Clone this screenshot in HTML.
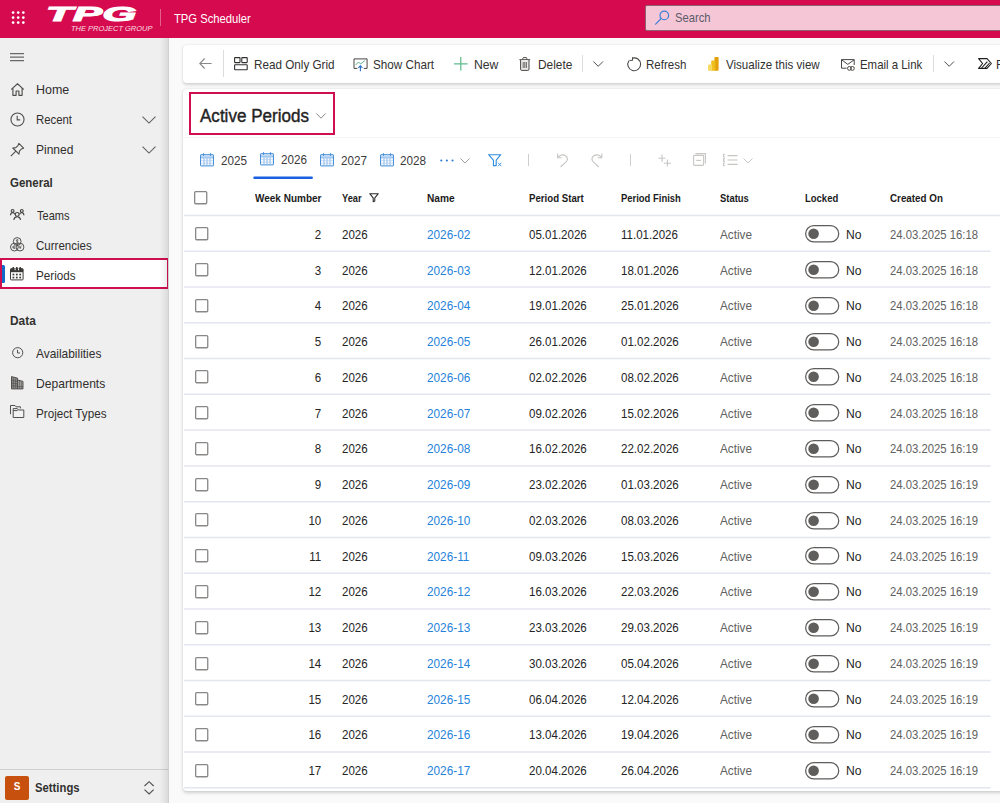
<!DOCTYPE html>
<html lang="en">
<head>
<meta charset="utf-8">
<title>TPG Scheduler - Active Periods</title>
<style>
html,body{margin:0;padding:0}
body{width:1000px;height:803px;overflow:hidden;background:#fafafa;font-family:"Liberation Sans",sans-serif;font-size:12.8px;color:#242424;position:relative;letter-spacing:0;-webkit-font-smoothing:antialiased}
*{box-sizing:border-box}
.abs,.t{position:absolute;white-space:nowrap}
.t,.c{transform-origin:0 50%;letter-spacing:0}
.t{line-height:16px;height:16px}
svg{position:absolute;overflow:visible}
svg.cb{position:absolute;left:10.5px;top:11.2px}

/* top bar */
#top{position:absolute;left:0;top:0;width:1000px;height:38px;background:#d60a4e}
#top .app{color:#fff}
#top .div{position:absolute;left:159.5px;top:9px;width:1px;height:16.5px;background:rgba(255,255,255,.35)}
#logo{position:absolute;left:47px;top:0;width:110px;height:37px;color:#fff}
#logo .big{position:absolute;left:-1.2px;top:3.2px;font-weight:700;font-style:italic;font-size:19.8px;line-height:22px;letter-spacing:0.2px;transform-origin:0 50%;transform:scaleX(2.2);-webkit-text-stroke:1.1px #fff}
#logo .sub{position:absolute;left:23.5px;top:23.5px;font-style:italic;font-size:8px;line-height:10px;letter-spacing:0;transform-origin:0 50%;transform:scaleX(0.935);opacity:.85}
#search{position:absolute;left:645px;top:4.6px;width:370px;height:26.5px;background:#f5c6d6;border:1px solid rgba(70,30,50,.6);border-radius:2px}
#search .t{color:#5b5b6b}

/* sidebar */
#side{position:absolute;left:0;top:38px;width:169px;height:765px;background:#efefef}
#side:after{content:"";position:absolute;right:0;top:0;width:10px;height:100%;background:linear-gradient(to right,rgba(0,0,0,0),rgba(0,0,0,.03) 40%,rgba(0,0,0,.085) 90%,rgba(208,208,208,1) 90%)}
#side .t{color:#2f2e2d}
#side .h{font-weight:700;color:#323130}
#side .sel{position:absolute;left:0;top:220.2px;width:169px;height:31.2px;background:#fff;border:2px solid #d00f50}
#side .sel i{position:absolute;left:0;top:5.2px;width:3px;height:18px;background:#1468c8;border-radius:0 1.5px 1.5px 0}
#side .foot{position:absolute;left:0;top:730.6px;width:169px;height:1px;background:#cfcfcf}
#side .badge{position:absolute;left:5px;top:737.7px;width:24px;height:24px;background:#c8500f;border-radius:2px;color:#fff;font-weight:700;font-size:10px;line-height:22.5px;text-align:center;letter-spacing:0}

/* command bar */
#cmd{position:absolute;left:182.6px;top:44.8px;width:830px;height:38px;background:#fff;border-radius:4px;box-shadow:0 1.4px 3px rgba(0,0,0,.15),0 0 2px rgba(0,0,0,.07)}
#cmd .t{color:#323130}
#cmd .sep{position:absolute;top:5px;width:1px;height:27px;background:#dcdcdc}

/* card */
#card{position:absolute;left:182.6px;top:89px;width:830px;height:701.7px;background:#fff;border-radius:4px;box-shadow:0 1.6px 3.5px rgba(0,0,0,.17),0 0 2px rgba(0,0,0,.07)}
#title{position:absolute;left:189px;top:92px;width:146px;height:43px;border:2px solid #d00f50;background:#fff}
#title .t{line-height:22px;height:22px;font-weight:400;color:#242424;-webkit-text-stroke:0.42px #242424}
.tab{color:#3b3a39}
#tabline{position:absolute;left:254px;top:176.5px;width:59px;height:2px;background:#1a66c9;border-radius:1px}
.hd{font-weight:700;color:#1b1b1b}

/* grid rows */
.grid{position:absolute;left:0;top:0;width:1000px;height:803px;pointer-events:none}
#hline{display:none}
.row{position:absolute;left:184px;width:806.5px;height:35.77px}
.cb{position:absolute;left:10.5px;top:11.2px}
.c{position:absolute;line-height:16px;height:16px;white-space:nowrap;color:#242424}
.nm{color:#2583da}
.st,.cr{color:#616161}
.yr{left:157.82px;transform:scaleX(0.9019)}
.nm{left:243.41px;transform:scaleX(0.9213)}
.ps{left:345.14px;transform:scaleX(0.9019)}
.pf{left:437.23px;transform:scaleX(0.9019)}
.st{left:535.84px;transform:scaleX(0.9188)}
.no{left:662.23px;transform:scaleX(0.9470)}
.cr{left:706.33px;transform:scaleX(0.8833)}
.wk{right:669.51px;transform-origin:100% 50%;transform:scaleX(0.9019)}
.tg{position:absolute;left:620.6px;top:9.3px}
</style>
</head>

<body>
<div id="top">
  <svg id="waffle" style="left:11px;top:11px" width="15" height="14" viewBox="0 0 15 14">
    <g fill="#fff">
      <circle cx="2.1" cy="1.6" r="1.35"/><circle cx="7.2" cy="1.6" r="1.35"/><circle cx="12.3" cy="1.6" r="1.35"/>
      <circle cx="2.1" cy="6.6" r="1.35"/><circle cx="7.2" cy="6.6" r="1.35"/><circle cx="12.3" cy="6.6" r="1.35"/>
      <circle cx="2.1" cy="11.6" r="1.35"/><circle cx="7.2" cy="11.6" r="1.35"/><circle cx="12.3" cy="11.6" r="1.35"/>
    </g>
  </svg>
  <div id="logo"><span class="abs big">TPG</span><span class="abs sub">THE PROJECT GROUP</span></div>
  <div class="div"></div>
  <span class="t app" style="left:174.32px;top:11px;transform:scaleX(0.8784)">TPG Scheduler</span>
  <div id="search">
    <svg style="left:8.6px;top:4.6px" width="15" height="15" viewBox="0 0 15 15"><circle cx="9.3" cy="5.4" r="4.3" fill="none" stroke="#3f7fd6" stroke-width="1.2"/><path d="M6.2 8.5 L0.6 14.1" stroke="#3f7fd6" stroke-width="1.2" fill="none" stroke-linecap="round"/></svg>
    <span class="t" style="left:28.69px;top:4.4px;transform:scaleX(0.8771)">Search</span>
  </div>
</div>

<div id="side">
  <svg id="burger" style="left:10px;top:14.5px" width="14" height="9" viewBox="0 0 14 9"><path d="M0 0.7h14M0 4.2h14M0 7.7h14" stroke="#6a6968" stroke-width="1.2" fill="none"/></svg>

  <svg style="left:11.1px;top:45.4px" width="13" height="13" viewBox="0 0 13 13"><path d="M0.6 6.1 L6.5 0.8 L12.4 6.1 M1.9 5.1 V12.3 H5.1 V8 H7.9 V12.3 H11.1 V5.1" fill="none" stroke="#4f4e4d" stroke-width="1.15" stroke-linejoin="round" stroke-linecap="round"/></svg>
  <span class="t" style="left:35.60px;top:44px;transform:scaleX(0.9750)">Home</span>

  <svg style="left:9.95px;top:73.6px" width="15" height="15" viewBox="0 0 15 15"><circle cx="7.5" cy="7.5" r="6.55" fill="none" stroke="#4f4e4d" stroke-width="1.1"/><path d="M7.2 3.8 V7.9 H10.2" fill="none" stroke="#4f4e4d" stroke-width="1.1"/></svg>
  <span class="t" style="left:35.69px;top:74px;transform:scaleX(0.8878)">Recent</span>
  <svg style="left:142.1px;top:78px" width="14" height="8" viewBox="0 0 14 8"><path d="M0.5 0.6 L7 7 L13.5 0.6" fill="none" stroke="#5e5d5c" stroke-width="1.05"/></svg>

  <svg style="left:9.8px;top:103.6px" width="15" height="15" viewBox="0 0 15 15"><path d="M8.8 1.4 L13.6 6.2 L11.4 7 L9.4 9.2 L9 12.2 L2.8 6 L5.8 5.6 L8 3.6 Z M5.6 9.4 L0.8 14.2" fill="none" stroke="#4f4e4d" stroke-width="1.1" stroke-linejoin="round"/></svg>
  <span class="t" style="left:35.64px;top:104px;transform:scaleX(0.9391)">Pinned</span>
  <svg style="left:142.1px;top:108px" width="14" height="8" viewBox="0 0 14 8"><path d="M0.5 0.6 L7 7 L13.5 0.6" fill="none" stroke="#5e5d5c" stroke-width="1.05"/></svg>

  <span class="t h" style="left:9.94px;top:137px;transform:scaleX(0.8959)">General</span>

  <svg style="left:10px;top:171.1px" width="14.4" height="11" viewBox="0 0 14.4 11"><g fill="none" stroke="#454443" stroke-width="1.15"><circle cx="7.2" cy="5.4" r="1.9"/><path d="M3.8 10.8 C4.2 8.6 5.6 7.8 7.2 7.8 S10.2 8.6 10.6 10.8"/><circle cx="2.6" cy="1.9" r="1.4"/><circle cx="11.8" cy="1.9" r="1.4"/><path d="M0.5 6.2 C0.5 4.4 1.4 3.7 2.6 3.7 S4.6 4.4 4.8 5.4 M13.9 6.2 C13.9 4.4 13 3.7 11.8 3.7 S9.8 4.4 9.6 5.4"/></g></svg>
  <span class="t" style="left:36.62px;top:170px;transform:scaleX(0.8638)">Teams</span>

  <svg style="left:10px;top:199.2px" width="14.4" height="14.6" viewBox="0 0 14.4 14.6"><g fill="none" stroke="#4f4e4d" stroke-width="1"><circle cx="7.2" cy="4.5" r="3.9"/><circle cx="4.4" cy="10.1" r="3.9"/><circle cx="10" cy="10.1" r="3.9"/><path d="M8.4 3.2 C7.6 2.4 6.2 2.8 6.4 3.8 C6.6 4.8 8.2 4.4 8.2 5.6 C8.2 6.4 6.8 6.6 6 5.8 M7.2 2.2 V6.8" stroke-width="0.8"/><path d="M5.6 9 C4.6 8.2 3 9 3 10.2 C3 11.4 4.6 12 5.6 11.2 M2.6 9.8 H5 M2.6 10.8 H5 M9 8.6 L10.2 10.4 L11.4 8.6 M10.2 10.4 V12 M9.2 10.6 H11.2" stroke-width="0.7"/></g></svg>
  <span class="t" style="left:36.02px;top:200px;transform:scaleX(0.9013)">Currencies</span>

  <div class="sel"><i></i></div>
  <svg style="left:10.4px;top:229.4px" width="13.6" height="13.4" viewBox="0 0 13.6 13.4"><rect x="0.5" y="1.7" width="12.6" height="11.2" rx="0.7" fill="#fff" stroke="#3b3a39" stroke-width="1"/><rect x="0.5" y="1.7" width="12.6" height="3.5" fill="#3b3a39"/><g fill="#3b3a39"><rect x="2.6" y="0" width="1.5" height="2.6"/><rect x="6.05" y="0" width="1.5" height="2.6"/><rect x="9.5" y="0" width="1.5" height="2.6"/><rect x="2.5" y="6.7" width="1.8" height="1.7"/><rect x="5.9" y="6.7" width="1.8" height="1.7"/><rect x="9.3" y="6.7" width="1.8" height="1.7"/><rect x="2.5" y="9.7" width="1.8" height="1.7"/><rect x="5.9" y="9.7" width="1.8" height="1.7"/><rect x="9.3" y="9.7" width="1.8" height="1.7"/></g><g fill="#fff"><rect x="4.6" y="1.4" width="1" height="1.8"/><rect x="8" y="1.4" width="1" height="1.8"/></g></svg>
  <span class="t" style="left:35.67px;top:230px;transform:scaleX(0.9113)">Periods</span>

  <span class="t h" style="left:9.63px;top:275px;transform:scaleX(0.9279)">Data</span>

  <svg style="left:11.7px;top:308.6px" width="11.4" height="11.4" viewBox="0 0 11.4 11.4"><circle cx="5.7" cy="5.7" r="5.1" fill="none" stroke="#4f4e4d" stroke-width="1"/><path d="M5.5 2.8 V6 H8" fill="none" stroke="#4f4e4d" stroke-width="1"/></svg>
  <span class="t" style="left:36.24px;top:308px;transform:scaleX(0.9312)">Availabilities</span>

  <svg style="left:10.9px;top:337.8px" width="12.6" height="13.4" viewBox="0 0 12.6 13.4"><path d="M0.5 12.9 V0.6 L6.6 2.2 V12.9 Z" fill="#8f8d8b" stroke="#4f4e4d" stroke-width="1"/><path d="M6.6 4 L12 5.4 V12.9 H6.6 Z" fill="#a9a7a5" stroke="#4f4e4d" stroke-width="1"/><path d="M2.4 2 V12 M4.6 2.6 V12 M0.8 4.4 L6.4 5.4 M0.8 7.2 L6.4 7.8 M0.8 10 H6.4 M8.6 5 V12.6 M10.4 5.6 V12.6 M6.8 10.6 H12" fill="none" stroke="#4f4e4d" stroke-width="0.6"/></svg>
  <span class="t" style="left:35.63px;top:338px;transform:scaleX(0.9456)">Departments</span>

  <svg style="left:10px;top:367px" width="14.3" height="13" viewBox="0 0 14.3 13"><g fill="none" stroke="#4f4e4d" stroke-width="1"><path d="M0.5 9.2 V0.5 H5 L6 1.8 H10.4 V3.4"/><path d="M3.2 3.6 H7.4 L8.4 5 H13.8 V12.5 H3.2 Z" fill="#f3f3f3"/><path d="M3.2 5.6 H7.6"/></g></svg>
  <span class="t" style="left:35.67px;top:368px;transform:scaleX(0.9124)">Project Types</span>

  <div class="foot"></div>
  <div class="badge">S</div>
  <span class="t" style="left:34.86px;top:742px;transform:scaleX(0.8831);font-weight:700;color:#323130">Settings</span>
  <svg style="left:144.2px;top:743px" width="10.2" height="13.6" viewBox="0 0 10.2 13.6"><path d="M0.5 5 L5.1 0.7 L9.7 5 M0.5 8.6 L5.1 12.9 L9.7 8.6" fill="none" stroke="#4f4e4d" stroke-width="1.1"/></svg>
</div>

<div id="cmd">
  <svg style="left:16.6px;top:13px" width="13" height="11" viewBox="0 0 13 11"><path d="M5.6 0.5 L0.8 5.5 L5.6 10.5 M1 5.5 H12.6" fill="none" stroke="#8a8886" stroke-width="1.1"/></svg>
  <div class="sep" style="left:40.4px;top:5.4px"></div>

  <svg style="left:51.6px;top:12px" width="14" height="14" viewBox="0 0 14 14"><g fill="none" stroke="#323130" stroke-width="1.1"><rect x="0.6" y="0.6" width="5.4" height="5" rx="0.5"/><rect x="7.8" y="0.6" width="5.4" height="5" rx="0.5"/><rect x="0.6" y="7.8" width="12.6" height="5" rx="0.5"/></g></svg>
  <span class="t" style="left:71.06px;top:12.2px;transform:scaleX(0.9139)">Read Only Grid</span>

  <svg style="left:170.7px;top:13px" width="14.6" height="13.4" viewBox="0 0 14.6 13.4"><g fill="none" stroke-width="1"><path d="M4.4 10.4 H1 V0.9 H14.1 V10.4 H10.8" stroke="#484644"/><path d="M2.6 7 L5.6 4 L7.6 6 L11.8 2.6" stroke="#5cb486"/><path d="M7.4 13.2 V8 M5.4 9.8 L7.4 7.8 L9.4 9.8" stroke="#2b6fcf" stroke-width="1.1"/></g></svg>
  <span class="t" style="left:190.67px;top:12.2px;transform:scaleX(0.9127)">Show Chart</span>

  <svg style="left:271.7px;top:12.1px" width="13.6" height="13.6" viewBox="0 0 13.6 13.6"><path d="M6.8 0 V13.6 M0 6.8 H13.6" stroke="#62bb8d" stroke-width="1.25" fill="none"/></svg>
  <span class="t" style="left:290.92px;top:12.2px;transform:scaleX(0.9537)">New</span>

  <svg style="left:336.3px;top:12.2px" width="11.6" height="14" viewBox="0 0 11.6 14"><g fill="none" stroke="#484644" stroke-width="1"><path d="M0.4 2.7 H11.2 M3.8 2.5 V1.4 Q3.8 0.6 4.6 0.6 H7 Q7.8 0.6 7.8 1.4 V2.5"/><path d="M1.6 3 V12.2 Q1.6 13.4 2.8 13.4 H8.8 Q10 13.4 10 12.2 V3" fill="#e9e9e9"/><path d="M4.2 5 V11 M5.8 5 V11 M7.4 5 V11" stroke="#6a6866"/></g></svg>
  <span class="t" style="left:355.35px;top:12.2px;transform:scaleX(0.9296)">Delete</span>
  <div class="sep" style="left:399.5px;top:10.2px;height:17.4px"></div>
  <svg style="left:410.7px;top:16.6px" width="10.4" height="6" viewBox="0 0 10.4 6"><path d="M0.4 0.5 L5.2 5.3 L10 0.5" fill="none" stroke="#4f4e4d" stroke-width="1"/></svg>

  <svg style="left:444.5px;top:12px" width="14.4" height="14.4" viewBox="0 0 14.4 14.4"><g fill="none" stroke="#484644" stroke-width="1.1"><path d="M5.2 1.2 A6.4 6.4 0 1 1 1.9 3.7"/><path d="M5.6 0.2 V3.4 H2.4" stroke-width="1"/></g></svg>
  <span class="t" style="left:463.48px;top:12.2px;transform:scaleX(0.8988)">Refresh</span>

  <svg style="left:525.4px;top:12.2px" width="10.8" height="13.8" viewBox="0 0 10.8 13.8"><rect x="6.4" y="0" width="4.2" height="13.8" rx="0.8" fill="#e2a10a"/><rect x="3.2" y="3.6" width="4.2" height="10.2" rx="0.8" fill="#f0be1c"/><rect x="0" y="7.4" width="4.2" height="6.4" rx="0.8" fill="#f7d860"/></svg>
  <span class="t" style="left:543.64px;top:12.2px;transform:scaleX(0.9043)">Visualize this view</span>

  <svg style="left:658.3px;top:14.4px" width="14" height="12" viewBox="0 0 14 12"><g fill="none" stroke="#484644" stroke-width="1"><path d="M5.6 9.2 H0.5 V0.6 H13.2 V6"/><path d="M0.6 0.8 L6.8 5.4 L13.1 0.8"/><circle cx="8.4" cy="9.4" r="1.9"/><circle cx="11.4" cy="9.4" r="1.9"/></g></svg>
  <span class="t" style="left:677.49px;top:12.2px;transform:scaleX(0.8926)">Email a Link</span>
  <div class="sep" style="left:750.5px;top:10.2px;height:17.4px"></div>
  <svg style="left:761.3px;top:16.4px" width="10.4" height="6" viewBox="0 0 10.4 6"><path d="M0.4 0.5 L5.2 5.3 L10 0.5" fill="none" stroke="#4f4e4d" stroke-width="1"/></svg>

  <svg style="left:795.6px;top:13.5px" width="14" height="11" viewBox="0 0 14 11"><g fill="none" stroke="#201f1e" stroke-width="1.1" stroke-linejoin="round"><path d="M0.6 0.6 H9 L13.4 5.5 L9 10.4 H0.6 L4.6 5.5 Z"/><path d="M3.6 10 L9.4 3.6 M7 10.2 L11.6 5"/></g></svg>
  <span class="t" style="left:813.25px;top:12.2px;transform:scaleX(0.9291)">Flow</span>
</div>

<div id="card"></div>
<div class="abs" style="left:183px;top:137px;width:817px;height:1px;background:#f6f6f6"></div>
<div id="title"><span class="t" style="left:9.11px;top:11px;transform:scaleX(0.9466);font-size:18px">Active Periods</span>
  <svg style="left:125.2px;top:19.3px" width="10" height="6" viewBox="0 0 10 6"><path d="M0.4 0.5 L5 5.2 L9.6 0.5" fill="none" stroke="#8a8886" stroke-width="1"/></svg>
</div>

<div id="tabs">
  <svg class="cal" style="left:200.3px;top:152.9px" width="14" height="14" viewBox="0 0 14 14"><rect x="0.55" y="1.7" width="12.9" height="11.2" rx="0.4" fill="#fdfeff" stroke="#3f8ad8" stroke-width="1"/><rect x="1" y="2.2" width="12" height="2.3" fill="#bcd7f3"/><path d="M1 4.9 H13" stroke="#6aa5e3" stroke-width="0.8"/><path d="M3.5 0.2 V2.8 M10.5 0.2 V2.8" stroke="#3f8ad8" stroke-width="1.1"/><path d="M4 5.4 V12.4 M7 5.4 V12.4 M10 5.4 V12.4" stroke="#7eb2e8" stroke-width="1" fill="none"/><path d="M1.2 7.6 H12.8 M1.2 10.2 H12.8" stroke="#b5d2f1" stroke-width="0.8" fill="none"/></svg>
  <span class="t tab" style="left:220.71px;top:153px;transform:scaleX(0.9148)">2025</span>
  <svg class="cal" style="left:260px;top:151.5px" width="14" height="14" viewBox="0 0 14 14"><rect x="0.55" y="1.7" width="12.9" height="11.2" rx="0.4" fill="#fdfeff" stroke="#3f8ad8" stroke-width="1"/><rect x="1" y="2.2" width="12" height="2.3" fill="#bcd7f3"/><path d="M1 4.9 H13" stroke="#6aa5e3" stroke-width="0.8"/><path d="M3.5 0.2 V2.8 M10.5 0.2 V2.8" stroke="#3f8ad8" stroke-width="1.1"/><path d="M4 5.4 V12.4 M7 5.4 V12.4 M10 5.4 V12.4" stroke="#7eb2e8" stroke-width="1" fill="none"/><path d="M1.2 7.6 H12.8 M1.2 10.2 H12.8" stroke="#b5d2f1" stroke-width="0.8" fill="none"/></svg>
  <span class="t tab" style="left:280.82px;top:152px;transform:scaleX(0.9133)">2026</span>
  <svg class="cal" style="left:320px;top:152.5px" width="14" height="14" viewBox="0 0 14 14"><rect x="0.55" y="1.7" width="12.9" height="11.2" rx="0.4" fill="#fdfeff" stroke="#3f8ad8" stroke-width="1"/><rect x="1" y="2.2" width="12" height="2.3" fill="#bcd7f3"/><path d="M1 4.9 H13" stroke="#6aa5e3" stroke-width="0.8"/><path d="M3.5 0.2 V2.8 M10.5 0.2 V2.8" stroke="#3f8ad8" stroke-width="1.1"/><path d="M4 5.4 V12.4 M7 5.4 V12.4 M10 5.4 V12.4" stroke="#7eb2e8" stroke-width="1" fill="none"/><path d="M1.2 7.6 H12.8 M1.2 10.2 H12.8" stroke="#b5d2f1" stroke-width="0.8" fill="none"/></svg>
  <span class="t tab" style="left:340.71px;top:153px;transform:scaleX(0.9154)">2027</span>
  <svg class="cal" style="left:379.5px;top:152.5px" width="14" height="14" viewBox="0 0 14 14"><rect x="0.55" y="1.7" width="12.9" height="11.2" rx="0.4" fill="#fdfeff" stroke="#3f8ad8" stroke-width="1"/><rect x="1" y="2.2" width="12" height="2.3" fill="#bcd7f3"/><path d="M1 4.9 H13" stroke="#6aa5e3" stroke-width="0.8"/><path d="M3.5 0.2 V2.8 M10.5 0.2 V2.8" stroke="#3f8ad8" stroke-width="1.1"/><path d="M4 5.4 V12.4 M7 5.4 V12.4 M10 5.4 V12.4" stroke="#7eb2e8" stroke-width="1" fill="none"/><path d="M1.2 7.6 H12.8 M1.2 10.2 H12.8" stroke="#b5d2f1" stroke-width="0.8" fill="none"/></svg>
  <span class="t tab" style="left:400.41px;top:153px;transform:scaleX(0.9148)">2028</span>
  <svg style="left:253px;top:176px" width="61" height="4" viewBox="0 0 61 4"><rect x="0.3" y="0.5" width="59.6" height="2.5" rx="1.1" fill="#1a60e0"/></svg>
  <svg style="left:440.1px;top:158.5px" width="14" height="3" viewBox="0 0 14 3"><g fill="#2b79d0"><circle cx="1.3" cy="1.5" r="1.05"/><circle cx="6.9" cy="1.5" r="1.05"/><circle cx="12.5" cy="1.5" r="1.05"/></g></svg>
  <svg style="left:460.4px;top:157.6px" width="10" height="6" viewBox="0 0 10 6"><path d="M0.4 0.4 L5 5.1 L9.6 0.4" fill="none" stroke="#a19f9d" stroke-width="1"/></svg>

  <svg style="left:487.6px;top:153.8px" width="14" height="13" viewBox="0 0 14 13"><g fill="none" stroke="#2f8cdc" stroke-width="1.1"><path d="M0.6 0.7 H12.8 L8.2 6.2 V11.6 H5.4 V6.2 Z" stroke-linejoin="round"/><path d="M10 8.8 L13.4 12.2 M13.4 8.8 L10 12.2" stroke-width="0.9"/></g></svg>

  <div class="abs" style="left:527.5px;top:154px;width:1px;height:12px;background:#d0cecc"></div>
  <svg style="left:557px;top:152.8px" width="11.4" height="14.4" viewBox="0 0 11.4 14.4"><path d="M0.6 0.6 V4.8 H4.8 M0.9 4.5 C2.8 1.6 7.2 0.8 9.5 3.6 C10.9 5.4 10.4 7.6 8.8 9.2 L3.6 14" fill="none" stroke="#c8c6c4" stroke-width="1.1"/></svg>
  <svg style="left:591.2px;top:152.8px" width="11.4" height="14.4" viewBox="0 0 11.4 14.4"><path d="M10.8 0.6 V4.8 H6.6 M10.5 4.5 C8.6 1.6 4.2 0.8 1.9 3.6 C0.5 5.4 1 7.6 2.6 9.2 L7.8 14" fill="none" stroke="#c8c6c4" stroke-width="1.1"/></svg>
  <div class="abs" style="left:629.5px;top:154px;width:1px;height:12px;background:#d0cecc"></div>
  <svg style="left:657.5px;top:153.5px" width="14" height="13" viewBox="0 0 14 13"><path d="M4 0.5 V8 M0.4 4.2 H7.6 M9.4 5.6 V12.6 M5.8 9.2 H13" fill="none" stroke="#c8c6c4" stroke-width="1.1"/></svg>
  <svg style="left:692.8px;top:153.2px" width="13" height="13" viewBox="0 0 13 13"><g fill="none" stroke="#c8c6c4" stroke-width="1.1"><rect x="0.6" y="2.4" width="10" height="10" rx="0.8"/><path d="M2.4 0.6 H12.4 V10.6"/><path d="M3.2 7.4 H8"/></g></svg>
  <svg style="left:722.5px;top:154px" width="15" height="12" viewBox="0 0 15 12"><path d="M4.6 1.6 H14.6 M4.6 6 H14.6 M4.6 10.4 H14.6 M1.8 0.4 H0.6 V3 H1.8 M1.8 4.6 H0.6 V7.4 H1.8 M1.8 9 H0.6 V11.6 H1.8" fill="none" stroke="#c8c6c4" stroke-width="1.1"/></svg>
  <svg style="left:742.6px;top:157.5px" width="10" height="6" viewBox="0 0 10 6"><path d="M0.5 0.5 L5 5 L9.5 0.5" fill="none" stroke="#c8c6c4" stroke-width="1"/></svg>
</div>

<div id="hdr">
  <svg class="cb" style="left:194.4px;top:190.8px" width="13.4" height="13.4" viewBox="0 0 13.4 13.4"><rect x="0.65" y="0.65" width="12.1" height="12.1" rx="1" fill="#fff" stroke="#8a8886" stroke-width="1.3"/></svg>
  <span class="t hd" style="left:254.90px;top:190px;transform:scaleX(0.8935);font-size:11.2px">Week Number</span>
  <span class="t hd" style="left:341.81px;top:190px;transform:scaleX(0.8285);font-size:11.2px">Year</span>
  <svg style="left:368.8px;top:192.6px" width="10" height="9.4" viewBox="0 0 10 9.4"><path d="M0.7 0.7 H9.3 L5.8 4.8 V8 L4.2 8.8 V4.8 Z" fill="none" stroke="#2b2a29" stroke-width="1.05" stroke-linejoin="round"/></svg>
  <span class="t hd" style="left:427.34px;top:190px;transform:scaleX(0.9082);font-size:11.2px">Name</span>
  <span class="t hd" style="left:529.27px;top:190px;transform:scaleX(0.8641);font-size:11.2px">Period Start</span>
  <span class="t hd" style="left:620.69px;top:190px;transform:scaleX(0.8440);font-size:11.2px">Period Finish</span>
  <span class="t hd" style="left:719.62px;top:190px;transform:scaleX(0.8435);font-size:11.2px">Status</span>
  <span class="t hd" style="left:804.88px;top:190px;transform:scaleX(0.8478);font-size:11.2px">Locked</span>
  <span class="t hd" style="left:890.01px;top:190px;transform:scaleX(0.8777);font-size:11.2px">Created On</span>
  <div id="hline"></div>

<div class="grid">
<div class="row" style="top:216.10px"><svg class="cb" width="13.4" height="13.4" viewBox="0 0 13.4 13.4"><rect x="0.65" y="0.65" width="12.1" height="12.1" rx="1" fill="#fff" stroke="#8a8886" stroke-width="1.3"/></svg><span class="c wk" style="top:10.90px">2</span><span class="c yr" style="top:10.90px">2026</span><span class="c nm" style="top:10.90px">2026-02</span><span class="c ps" style="top:10.90px">05.01.2026</span><span class="c pf" style="top:10.90px">11.01.2026</span><span class="c st" style="top:10.90px">Active</span><svg class="tg" width="34.4" height="17.6" viewBox="0 0 34.4 17.6"><rect x="0.65" y="0.65" width="33.1" height="16.3" rx="8.15" fill="#fff" stroke="#5f5d5b" stroke-width="1.25"/><circle cx="8.6" cy="8.8" r="5.3" fill="#605e5c"/></svg><span class="c no" style="top:10.90px">No</span><span class="c cr" style="top:10.90px">24.03.2025 16:18</span></div>
<div class="row" style="top:251.87px"><svg class="cb" width="13.4" height="13.4" viewBox="0 0 13.4 13.4"><rect x="0.65" y="0.65" width="12.1" height="12.1" rx="1" fill="#fff" stroke="#8a8886" stroke-width="1.3"/></svg><span class="c wk" style="top:11.13px">3</span><span class="c yr" style="top:11.13px">2026</span><span class="c nm" style="top:11.13px">2026-03</span><span class="c ps" style="top:11.13px">12.01.2026</span><span class="c pf" style="top:11.13px">18.01.2026</span><span class="c st" style="top:11.13px">Active</span><svg class="tg" width="34.4" height="17.6" viewBox="0 0 34.4 17.6"><rect x="0.65" y="0.65" width="33.1" height="16.3" rx="8.15" fill="#fff" stroke="#5f5d5b" stroke-width="1.25"/><circle cx="8.6" cy="8.8" r="5.3" fill="#605e5c"/></svg><span class="c no" style="top:11.13px">No</span><span class="c cr" style="top:11.13px">24.03.2025 16:18</span></div>
<div class="row" style="top:287.64px"><svg class="cb" width="13.4" height="13.4" viewBox="0 0 13.4 13.4"><rect x="0.65" y="0.65" width="12.1" height="12.1" rx="1" fill="#fff" stroke="#8a8886" stroke-width="1.3"/></svg><span class="c wk" style="top:10.36px">4</span><span class="c yr" style="top:10.36px">2026</span><span class="c nm" style="top:10.36px">2026-04</span><span class="c ps" style="top:10.36px">19.01.2026</span><span class="c pf" style="top:10.36px">25.01.2026</span><span class="c st" style="top:10.36px">Active</span><svg class="tg" width="34.4" height="17.6" viewBox="0 0 34.4 17.6"><rect x="0.65" y="0.65" width="33.1" height="16.3" rx="8.15" fill="#fff" stroke="#5f5d5b" stroke-width="1.25"/><circle cx="8.6" cy="8.8" r="5.3" fill="#605e5c"/></svg><span class="c no" style="top:10.36px">No</span><span class="c cr" style="top:10.36px">24.03.2025 16:18</span></div>
<div class="row" style="top:323.41px"><svg class="cb" width="13.4" height="13.4" viewBox="0 0 13.4 13.4"><rect x="0.65" y="0.65" width="12.1" height="12.1" rx="1" fill="#fff" stroke="#8a8886" stroke-width="1.3"/></svg><span class="c wk" style="top:10.59px">5</span><span class="c yr" style="top:10.59px">2026</span><span class="c nm" style="top:10.59px">2026-05</span><span class="c ps" style="top:10.59px">26.01.2026</span><span class="c pf" style="top:10.59px">01.02.2026</span><span class="c st" style="top:10.59px">Active</span><svg class="tg" width="34.4" height="17.6" viewBox="0 0 34.4 17.6"><rect x="0.65" y="0.65" width="33.1" height="16.3" rx="8.15" fill="#fff" stroke="#5f5d5b" stroke-width="1.25"/><circle cx="8.6" cy="8.8" r="5.3" fill="#605e5c"/></svg><span class="c no" style="top:10.59px">No</span><span class="c cr" style="top:10.59px">24.03.2025 16:18</span></div>
<div class="row" style="top:359.18px"><svg class="cb" width="13.4" height="13.4" viewBox="0 0 13.4 13.4"><rect x="0.65" y="0.65" width="12.1" height="12.1" rx="1" fill="#fff" stroke="#8a8886" stroke-width="1.3"/></svg><span class="c wk" style="top:10.82px">6</span><span class="c yr" style="top:10.82px">2026</span><span class="c nm" style="top:10.82px">2026-06</span><span class="c ps" style="top:10.82px">02.02.2026</span><span class="c pf" style="top:10.82px">08.02.2026</span><span class="c st" style="top:10.82px">Active</span><svg class="tg" width="34.4" height="17.6" viewBox="0 0 34.4 17.6"><rect x="0.65" y="0.65" width="33.1" height="16.3" rx="8.15" fill="#fff" stroke="#5f5d5b" stroke-width="1.25"/><circle cx="8.6" cy="8.8" r="5.3" fill="#605e5c"/></svg><span class="c no" style="top:10.82px">No</span><span class="c cr" style="top:10.82px">24.03.2025 16:18</span></div>
<div class="row" style="top:394.95px"><svg class="cb" width="13.4" height="13.4" viewBox="0 0 13.4 13.4"><rect x="0.65" y="0.65" width="12.1" height="12.1" rx="1" fill="#fff" stroke="#8a8886" stroke-width="1.3"/></svg><span class="c wk" style="top:11.05px">7</span><span class="c yr" style="top:11.05px">2026</span><span class="c nm" style="top:11.05px">2026-07</span><span class="c ps" style="top:11.05px">09.02.2026</span><span class="c pf" style="top:11.05px">15.02.2026</span><span class="c st" style="top:11.05px">Active</span><svg class="tg" width="34.4" height="17.6" viewBox="0 0 34.4 17.6"><rect x="0.65" y="0.65" width="33.1" height="16.3" rx="8.15" fill="#fff" stroke="#5f5d5b" stroke-width="1.25"/><circle cx="8.6" cy="8.8" r="5.3" fill="#605e5c"/></svg><span class="c no" style="top:11.05px">No</span><span class="c cr" style="top:11.05px">24.03.2025 16:18</span></div>
<div class="row" style="top:430.72px"><svg class="cb" width="13.4" height="13.4" viewBox="0 0 13.4 13.4"><rect x="0.65" y="0.65" width="12.1" height="12.1" rx="1" fill="#fff" stroke="#8a8886" stroke-width="1.3"/></svg><span class="c wk" style="top:10.28px">8</span><span class="c yr" style="top:10.28px">2026</span><span class="c nm" style="top:10.28px">2026-08</span><span class="c ps" style="top:10.28px">16.02.2026</span><span class="c pf" style="top:10.28px">22.02.2026</span><span class="c st" style="top:10.28px">Active</span><svg class="tg" width="34.4" height="17.6" viewBox="0 0 34.4 17.6"><rect x="0.65" y="0.65" width="33.1" height="16.3" rx="8.15" fill="#fff" stroke="#5f5d5b" stroke-width="1.25"/><circle cx="8.6" cy="8.8" r="5.3" fill="#605e5c"/></svg><span class="c no" style="top:10.28px">No</span><span class="c cr" style="top:10.28px">24.03.2025 16:19</span></div>
<div class="row" style="top:466.49px"><svg class="cb" width="13.4" height="13.4" viewBox="0 0 13.4 13.4"><rect x="0.65" y="0.65" width="12.1" height="12.1" rx="1" fill="#fff" stroke="#8a8886" stroke-width="1.3"/></svg><span class="c wk" style="top:10.51px">9</span><span class="c yr" style="top:10.51px">2026</span><span class="c nm" style="top:10.51px">2026-09</span><span class="c ps" style="top:10.51px">23.02.2026</span><span class="c pf" style="top:10.51px">01.03.2026</span><span class="c st" style="top:10.51px">Active</span><svg class="tg" width="34.4" height="17.6" viewBox="0 0 34.4 17.6"><rect x="0.65" y="0.65" width="33.1" height="16.3" rx="8.15" fill="#fff" stroke="#5f5d5b" stroke-width="1.25"/><circle cx="8.6" cy="8.8" r="5.3" fill="#605e5c"/></svg><span class="c no" style="top:10.51px">No</span><span class="c cr" style="top:10.51px">24.03.2025 16:19</span></div>
<div class="row" style="top:502.26px"><svg class="cb" width="13.4" height="13.4" viewBox="0 0 13.4 13.4"><rect x="0.65" y="0.65" width="12.1" height="12.1" rx="1" fill="#fff" stroke="#8a8886" stroke-width="1.3"/></svg><span class="c wk" style="top:10.74px">10</span><span class="c yr" style="top:10.74px">2026</span><span class="c nm" style="top:10.74px">2026-10</span><span class="c ps" style="top:10.74px">02.03.2026</span><span class="c pf" style="top:10.74px">08.03.2026</span><span class="c st" style="top:10.74px">Active</span><svg class="tg" width="34.4" height="17.6" viewBox="0 0 34.4 17.6"><rect x="0.65" y="0.65" width="33.1" height="16.3" rx="8.15" fill="#fff" stroke="#5f5d5b" stroke-width="1.25"/><circle cx="8.6" cy="8.8" r="5.3" fill="#605e5c"/></svg><span class="c no" style="top:10.74px">No</span><span class="c cr" style="top:10.74px">24.03.2025 16:19</span></div>
<div class="row" style="top:538.03px"><svg class="cb" width="13.4" height="13.4" viewBox="0 0 13.4 13.4"><rect x="0.65" y="0.65" width="12.1" height="12.1" rx="1" fill="#fff" stroke="#8a8886" stroke-width="1.3"/></svg><span class="c wk" style="top:10.97px">11</span><span class="c yr" style="top:10.97px">2026</span><span class="c nm" style="top:10.97px">2026-11</span><span class="c ps" style="top:10.97px">09.03.2026</span><span class="c pf" style="top:10.97px">15.03.2026</span><span class="c st" style="top:10.97px">Active</span><svg class="tg" width="34.4" height="17.6" viewBox="0 0 34.4 17.6"><rect x="0.65" y="0.65" width="33.1" height="16.3" rx="8.15" fill="#fff" stroke="#5f5d5b" stroke-width="1.25"/><circle cx="8.6" cy="8.8" r="5.3" fill="#605e5c"/></svg><span class="c no" style="top:10.97px">No</span><span class="c cr" style="top:10.97px">24.03.2025 16:19</span></div>
<div class="row" style="top:573.80px"><svg class="cb" width="13.4" height="13.4" viewBox="0 0 13.4 13.4"><rect x="0.65" y="0.65" width="12.1" height="12.1" rx="1" fill="#fff" stroke="#8a8886" stroke-width="1.3"/></svg><span class="c wk" style="top:10.20px">12</span><span class="c yr" style="top:10.20px">2026</span><span class="c nm" style="top:10.20px">2026-12</span><span class="c ps" style="top:10.20px">16.03.2026</span><span class="c pf" style="top:10.20px">22.03.2026</span><span class="c st" style="top:10.20px">Active</span><svg class="tg" width="34.4" height="17.6" viewBox="0 0 34.4 17.6"><rect x="0.65" y="0.65" width="33.1" height="16.3" rx="8.15" fill="#fff" stroke="#5f5d5b" stroke-width="1.25"/><circle cx="8.6" cy="8.8" r="5.3" fill="#605e5c"/></svg><span class="c no" style="top:10.20px">No</span><span class="c cr" style="top:10.20px">24.03.2025 16:19</span></div>
<div class="row" style="top:609.57px"><svg class="cb" width="13.4" height="13.4" viewBox="0 0 13.4 13.4"><rect x="0.65" y="0.65" width="12.1" height="12.1" rx="1" fill="#fff" stroke="#8a8886" stroke-width="1.3"/></svg><span class="c wk" style="top:10.43px">13</span><span class="c yr" style="top:10.43px">2026</span><span class="c nm" style="top:10.43px">2026-13</span><span class="c ps" style="top:10.43px">23.03.2026</span><span class="c pf" style="top:10.43px">29.03.2026</span><span class="c st" style="top:10.43px">Active</span><svg class="tg" width="34.4" height="17.6" viewBox="0 0 34.4 17.6"><rect x="0.65" y="0.65" width="33.1" height="16.3" rx="8.15" fill="#fff" stroke="#5f5d5b" stroke-width="1.25"/><circle cx="8.6" cy="8.8" r="5.3" fill="#605e5c"/></svg><span class="c no" style="top:10.43px">No</span><span class="c cr" style="top:10.43px">24.03.2025 16:19</span></div>
<div class="row" style="top:645.34px"><svg class="cb" width="13.4" height="13.4" viewBox="0 0 13.4 13.4"><rect x="0.65" y="0.65" width="12.1" height="12.1" rx="1" fill="#fff" stroke="#8a8886" stroke-width="1.3"/></svg><span class="c wk" style="top:10.66px">14</span><span class="c yr" style="top:10.66px">2026</span><span class="c nm" style="top:10.66px">2026-14</span><span class="c ps" style="top:10.66px">30.03.2026</span><span class="c pf" style="top:10.66px">05.04.2026</span><span class="c st" style="top:10.66px">Active</span><svg class="tg" width="34.4" height="17.6" viewBox="0 0 34.4 17.6"><rect x="0.65" y="0.65" width="33.1" height="16.3" rx="8.15" fill="#fff" stroke="#5f5d5b" stroke-width="1.25"/><circle cx="8.6" cy="8.8" r="5.3" fill="#605e5c"/></svg><span class="c no" style="top:10.66px">No</span><span class="c cr" style="top:10.66px">24.03.2025 16:19</span></div>
<div class="row" style="top:681.11px"><svg class="cb" width="13.4" height="13.4" viewBox="0 0 13.4 13.4"><rect x="0.65" y="0.65" width="12.1" height="12.1" rx="1" fill="#fff" stroke="#8a8886" stroke-width="1.3"/></svg><span class="c wk" style="top:10.89px">15</span><span class="c yr" style="top:10.89px">2026</span><span class="c nm" style="top:10.89px">2026-15</span><span class="c ps" style="top:10.89px">06.04.2026</span><span class="c pf" style="top:10.89px">12.04.2026</span><span class="c st" style="top:10.89px">Active</span><svg class="tg" width="34.4" height="17.6" viewBox="0 0 34.4 17.6"><rect x="0.65" y="0.65" width="33.1" height="16.3" rx="8.15" fill="#fff" stroke="#5f5d5b" stroke-width="1.25"/><circle cx="8.6" cy="8.8" r="5.3" fill="#605e5c"/></svg><span class="c no" style="top:10.89px">No</span><span class="c cr" style="top:10.89px">24.03.2025 16:19</span></div>
<div class="row" style="top:716.88px"><svg class="cb" width="13.4" height="13.4" viewBox="0 0 13.4 13.4"><rect x="0.65" y="0.65" width="12.1" height="12.1" rx="1" fill="#fff" stroke="#8a8886" stroke-width="1.3"/></svg><span class="c wk" style="top:10.12px">16</span><span class="c yr" style="top:10.12px">2026</span><span class="c nm" style="top:10.12px">2026-16</span><span class="c ps" style="top:10.12px">13.04.2026</span><span class="c pf" style="top:10.12px">19.04.2026</span><span class="c st" style="top:10.12px">Active</span><svg class="tg" width="34.4" height="17.6" viewBox="0 0 34.4 17.6"><rect x="0.65" y="0.65" width="33.1" height="16.3" rx="8.15" fill="#fff" stroke="#5f5d5b" stroke-width="1.25"/><circle cx="8.6" cy="8.8" r="5.3" fill="#605e5c"/></svg><span class="c no" style="top:10.12px">No</span><span class="c cr" style="top:10.12px">24.03.2025 16:19</span></div>
<div class="row" style="top:752.65px"><svg class="cb" width="13.4" height="13.4" viewBox="0 0 13.4 13.4"><rect x="0.65" y="0.65" width="12.1" height="12.1" rx="1" fill="#fff" stroke="#8a8886" stroke-width="1.3"/></svg><span class="c wk" style="top:10.35px">17</span><span class="c yr" style="top:10.35px">2026</span><span class="c nm" style="top:10.35px">2026-17</span><span class="c ps" style="top:10.35px">20.04.2026</span><span class="c pf" style="top:10.35px">26.04.2026</span><span class="c st" style="top:10.35px">Active</span><svg class="tg" width="34.4" height="17.6" viewBox="0 0 34.4 17.6"><rect x="0.65" y="0.65" width="33.1" height="16.3" rx="8.15" fill="#fff" stroke="#5f5d5b" stroke-width="1.25"/><circle cx="8.6" cy="8.8" r="5.3" fill="#605e5c"/></svg><span class="c no" style="top:10.35px">No</span><span class="c cr" style="top:10.35px">24.03.2025 16:19</span></div>
<svg class="seps" style="left:184px;top:205px" width="807" height="590" viewBox="0 0 807 590"><g stroke="#e4e6ef" stroke-width="1.5" fill="none"><path d="M0 10.50H830"/><path d="M0 46.27H806.6"/><path d="M0 82.04H806.6"/><path d="M0 117.81H806.6"/><path d="M0 153.58H806.6"/><path d="M0 189.35H806.6"/><path d="M0 225.12H806.6"/><path d="M0 260.89H806.6"/><path d="M0 296.66H806.6"/><path d="M0 332.43H806.6"/><path d="M0 368.20H806.6"/><path d="M0 403.97H806.6"/><path d="M0 439.74H806.6"/><path d="M0 475.51H806.6"/><path d="M0 511.28H806.6"/><path d="M0 547.05H806.6"/><path d="M0 582.82H806.6"/></g></svg>
</div>
</div>
</body>
</html>
